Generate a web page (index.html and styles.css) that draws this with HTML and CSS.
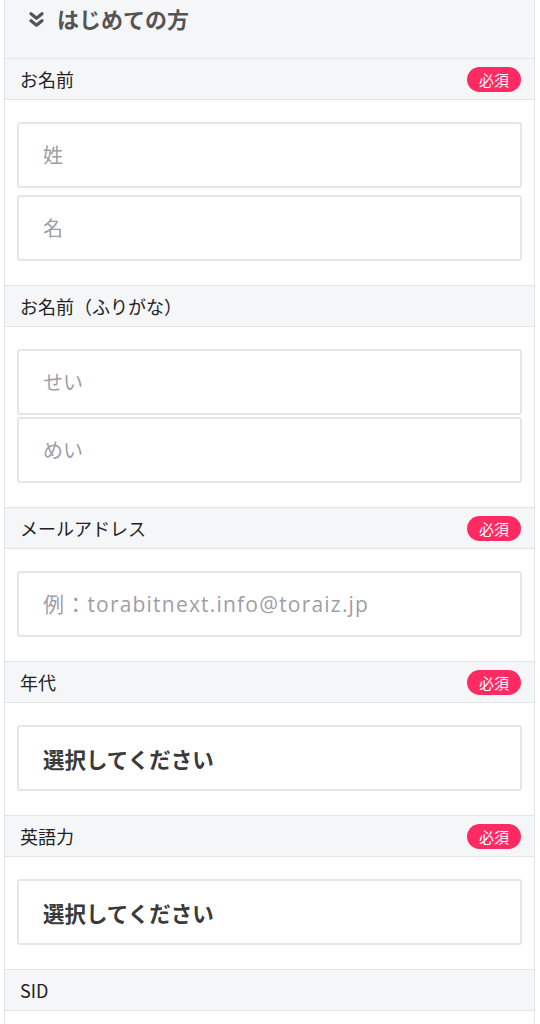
FILE: index.html
```html
<!DOCTYPE html>
<html lang="ja">
<head>
<meta charset="utf-8">
<link rel="stylesheet" href="styles.css">
</head>
<body>
<div class="form">
  <div class="form-title">
    <svg class="chev" width="15" height="15" viewBox="0 0 15 15" aria-hidden="true">
      <polyline points="2,1.8 7.5,6.3 13,1.8" fill="none" stroke="#555" stroke-width="3.2" stroke-linecap="round" stroke-linejoin="round"/>
      <polyline points="2,8.7 7.5,13.2 13,8.7" fill="none" stroke="#555" stroke-width="3.2" stroke-linecap="round" stroke-linejoin="round"/>
    </svg>
    <span>はじめての方</span>
  </div>

  <div class="field">
    <div class="field-label"><span>お名前</span><span class="badge">必須</span></div>
    <div class="field-body gap7">
      <input class="txt" type="text" placeholder="姓">
      <input class="txt" type="text" placeholder="名">
    </div>
  </div>

  <div class="field">
    <div class="field-label"><span>お名前（ふりがな）</span></div>
    <div class="field-body gap2">
      <input class="txt" type="text" placeholder="せい">
      <input class="txt" type="text" placeholder="めい">
    </div>
  </div>

  <div class="field">
    <div class="field-label"><span>メールアドレス</span><span class="badge">必須</span></div>
    <div class="field-body">
      <input class="txt email" type="text" placeholder="例：torabitnext.info@toraiz.jp">
    </div>
  </div>

  <div class="field">
    <div class="field-label"><span>年代</span><span class="badge">必須</span></div>
    <div class="field-body">
      <div class="sel">選択してください</div>
    </div>
  </div>

  <div class="field">
    <div class="field-label"><span>英語力</span><span class="badge">必須</span></div>
    <div class="field-body">
      <div class="sel">選択してください</div>
    </div>
  </div>

  <div class="field">
    <div class="field-label"><span>SID</span></div>
    <div class="field-body"></div>
  </div>
</div>
</body>
</html>
```

FILE: styles.css
```css
html, body {
  margin: 0;
  padding: 0;
  background: #fff;
}
body {
  font-family: "Noto Sans CJK JP", "Noto Sans", sans-serif;
  color: #222;
}
.form {
  margin-left: 4px;
  width: 531px;
  box-sizing: border-box;
  border-left: 1px solid #e3e4e7;
  border-right: 1px solid #e3e4e7;
}
.form-title {
  height: 59px;
  box-sizing: border-box;
  background: #f5f6f8;
  border-bottom: 1px solid #e3e4e7;
  display: flex;
  align-items: flex-start;
  gap: 13px;
  padding: 3px 0 0 24px;
  font-size: 22px;
  font-weight: bold;
  color: #555;
  line-height: 30px;
}
.chev {
  margin-top: 9px;
}
.field-label {
  height: 41px;
  box-sizing: border-box;
  background: #f5f6f8;
  border-bottom: 1px solid #e3e4e7;
  display: flex;
  align-items: center;
  justify-content: space-between;
  padding: 0 13px 0 15px;
  font-size: 18px;
}
.badge {
  background: #ff2a62;
  color: #fff;
  font-size: 15px;
  line-height: 25px;
  height: 25px;
  padding: 0 12px;
  border-radius: 13px;
}
.field-body {
  padding: 22px 12px 24px;
  border-bottom: 1px solid #e3e4e7;
  display: flex;
  flex-direction: column;
}
.field-body.gap7 { gap: 7px; }
.field-body.gap2 { gap: 2px; }
.txt, .sel {
  display: block;
  width: 100%;
  height: 66px;
  box-sizing: border-box;
  border: 2px solid #e6e6e8;
  border-radius: 3px;
  padding: 0 24px;
  font-family: "Open Sans", "Noto Sans CJK JP", sans-serif;
  font-size: 20px;
  background: #fff;
  outline: none;
  margin: 0;
}
.txt::placeholder {
  color: #9e9ea6;
}
.txt.email {
  font-size: 21px;
}
.txt.email::placeholder {
  letter-spacing: 1.2px;
}
.sel {
  display: flex;
  align-items: center;
  font-family: "Noto Sans CJK JP", sans-serif;
  font-weight: bold;
  font-size: 21.5px;
  color: #3a3a3a;
}
```
